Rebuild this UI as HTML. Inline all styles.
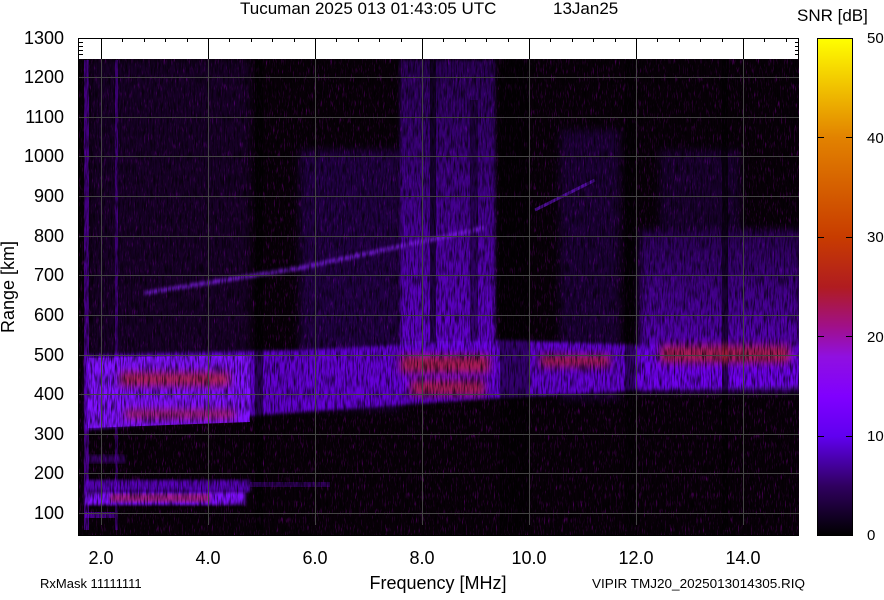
<!DOCTYPE html>
<html><head><meta charset="utf-8"><style>
body{margin:0;background:#fff;width:884px;height:595px;overflow:hidden;font-family:"Liberation Sans",sans-serif}
</style></head><body>
<svg width="884" height="595" viewBox="0 0 884 595" xmlns="http://www.w3.org/2000/svg" font-family="Liberation Sans, sans-serif">
<defs>
<filter id="b4" x="-20%" y="-20%" width="140%" height="140%"><feGaussianBlur stdDeviation="4"/></filter>
<filter id="b2"><feGaussianBlur stdDeviation="1.5"/></filter>
<filter id="noise" x="0" y="0" width="100%" height="100%">
<feTurbulence type="fractalNoise" baseFrequency="0.9 0.12" numOctaves="2" seed="3"/>
<feColorMatrix values="0 0 0 0 0.3  0 0 0 0 0.0  0 0 0 0 0.45  0 0 0 2.2 -1.3"/>
</filter>
<filter id="dark" x="0" y="0" width="100%" height="100%">
<feTurbulence type="fractalNoise" baseFrequency="0.7 0.08" numOctaves="2" seed="7"/>
<feColorMatrix values="0 0 0 0 0  0 0 0 0 0  0 0 0 0 0  0 0 0 2.5 -1.0"/>
</filter>
<clipPath id="pc"><rect x="79" y="59" width="720" height="476"/></clipPath>
<linearGradient id="cb" x1="0" y1="1" x2="0" y2="0">
<stop offset="0" stop-color="#000"/>
<stop offset="0.1" stop-color="#300060"/>
<stop offset="0.2" stop-color="#6000f0"/>
<stop offset="0.28" stop-color="#8000ff"/>
<stop offset="0.36" stop-color="#9010e0"/>
<stop offset="0.42" stop-color="#a0108a"/>
<stop offset="0.5" stop-color="#b01c20"/>
<stop offset="0.6" stop-color="#c83c00"/>
<stop offset="0.8" stop-color="#e28200"/>
<stop offset="1" stop-color="#ffff00"/>
</linearGradient>
<linearGradient id="fv" x1="0" y1="0" x2="0" y2="1">
<stop offset="0" stop-color="#5000b0" stop-opacity="0.45"/>
<stop offset="0.7" stop-color="#7000f0" stop-opacity="0.75"/>
<stop offset="1" stop-color="#7a10ff" stop-opacity="0.9"/>
</linearGradient>
</defs>
<text x="240" y="14" font-size="17">Tucuman 2025 013 01:43:05 UTC</text>
<text x="553" y="14" font-size="17">13Jan25</text>
<text x="797" y="21" font-size="17">SNR [dB]</text>
<rect x="78.5" y="38.5" width="720" height="497" fill="#fff" stroke="#000"/>
<rect x="79" y="59" width="720" height="476" fill="#080008"/>
<rect x="79" y="59" width="720" height="476" filter="url(#noise)"/>
<g clip-path="url(#pc)">
<rect x="84" y="60" width="5" height="470" fill="#6a00d0" opacity="0.6"/>
<rect x="90" y="60" width="160" height="300" fill="#3a0070" opacity="0.3" filter="url(#b4)"/>
<rect x="115" y="60" width="3" height="470" fill="#7000e0" opacity="0.4"/>
<rect x="400" y="60" width="95" height="330" fill="url(#fv)" filter="url(#b2)"/>
<rect x="430" y="60" width="6" height="330" fill="#000" opacity="0.6"/>
<rect x="470" y="100" width="8" height="290" fill="#000" opacity="0.4"/>
<rect x="300" y="150" width="100" height="260" fill="#5000b0" opacity="0.35" filter="url(#b4)"/>
<rect x="560" y="130" width="60" height="270" fill="#4a00a0" opacity="0.3" filter="url(#b4)"/>
<rect x="640" y="230" width="160" height="160" fill="url(#fv)" filter="url(#b4)"/>
<rect x="660" y="150" width="80" height="80" fill="#40008a" opacity="0.3" filter="url(#b4)"/>
<path d="M85 355 L300 350 L400 345 L500 340 L640 345 L799 345 L799 385 L640 390 L500 398 L400 405 L300 412 L200 420 L85 430 Z" fill="#7000f0" opacity="0.85" filter="url(#b2)"/>
<path d="M88 358 L250 355 L250 422 L88 428 Z" fill="#8010ff"/>
<rect x="255" y="60" width="8" height="470" fill="#000" opacity="0.55"/>
<rect x="500" y="60" width="30" height="470" fill="#000" opacity="0.45"/>
<rect x="625" y="60" width="10" height="470" fill="#000" opacity="0.5"/>
<rect x="722" y="60" width="6" height="470" fill="#000" opacity="0.6"/>
<g fill="#b82030" filter="url(#b4)" opacity="0.8">
<rect x="120" y="372" width="110" height="14"/>
<rect x="125" y="410" width="110" height="8"/>
<rect x="400" y="355" width="90" height="18"/>
<rect x="410" y="380" width="75" height="15"/>
<rect x="540" y="355" width="70" height="12"/>
<rect x="660" y="345" width="130" height="18"/>
</g>
<rect x="85" y="480" width="165" height="12" fill="#7000f0" opacity="0.75" filter="url(#b2)"/>
<rect x="85" y="492" width="160" height="13" fill="#8010ff" filter="url(#b2)"/>
<rect x="110" y="494" width="100" height="8" fill="#b02060" opacity="0.7" filter="url(#b2)"/>
<rect x="85" y="512" width="30" height="6" fill="#7000e0" opacity="0.6"/>
<rect x="85" y="455" width="40" height="8" fill="#6000c0" opacity="0.5" filter="url(#b2)"/>
<rect x="250" y="482" width="80" height="5" fill="#6000c0" opacity="0.4"/>
<path d="M145 293 L300 268 L485 228" stroke="#8a20ff" stroke-width="4" fill="none" opacity="0.75" filter="url(#b2)"/>
<path d="M535 210 L595 180" stroke="#7a18f0" stroke-width="3" fill="none" opacity="0.6"/>
<rect x="79" y="59" width="720" height="476" filter="url(#dark)" opacity="0.7"/>
</g>
<g stroke="#444" stroke-width="1">
<path d="M79 77.5H799M79 117.5H799M79 156.5H799M79 196.5H799M79 236.5H799M79 275.5H799M79 315.5H799M79 355.5H799M79 394.5H799M79 434.5H799M79 473.5H799M79 513.5H799"/>
<path d="M101.5 38V525M208.5 38V525M315.5 38V525M422.5 38V525M529.5 38V525M636.5 38V525M743.5 38V525"/>
</g>
<g stroke="#000">
<path d="M101.5 38V59M208.5 38V59M315.5 38V59M422.5 38V59M529.5 38V59M636.5 38V59M743.5 38V59"/>
<path d="M122.5 38v4M144.5 38v4M165.5 38v4M187.5 38v4M229.5 38v4M251.5 38v4M272.5 38v4M294.5 38v4M336.5 38v4M358.5 38v4M379.5 38v4M401.5 38v4M443.5 38v4M465.5 38v4M486.5 38v4M508.5 38v4M550.5 38v4M572.5 38v4M593.5 38v4M615.5 38v4M657.5 38v4M679.5 38v4M700.5 38v4M722.5 38v4M764.5 38v4M786.5 38v4"/>
<path d="M79 42.5h4M79 46.5h4M79 50.5h4M79 54.5h4M795 42.5h4M795 46.5h4M795 50.5h4M795 54.5h4"/>
</g>
<g font-size="18" text-anchor="end">
<text x="64" y="44">1300</text><text x="64" y="83">1200</text><text x="64" y="123">1100</text><text x="64" y="162">1000</text>
<text x="64" y="202">900</text><text x="64" y="242">800</text><text x="64" y="281">700</text><text x="64" y="321">600</text>
<text x="64" y="361">500</text><text x="64" y="400">400</text><text x="64" y="440">300</text><text x="64" y="479">200</text><text x="64" y="519">100</text>
</g>
<g font-size="18" text-anchor="middle">
<text x="101" y="564">2.0</text><text x="208" y="564">4.0</text><text x="315" y="564">6.0</text><text x="422" y="564">8.0</text>
<text x="529" y="564">10.0</text><text x="636" y="564">12.0</text><text x="743" y="564">14.0</text>
<text x="438" y="589">Frequency [MHz]</text>
</g>
<text x="14" y="287" font-size="18" text-anchor="middle" transform="rotate(-90 14 287)">Range [km]</text>
<text x="40" y="588" font-size="13">RxMask 11111111</text>
<text x="592" y="588" font-size="13" textLength="213" lengthAdjust="spacingAndGlyphs">VIPIR  TMJ20_2025013014305.RIQ</text>
<rect x="817.5" y="38.5" width="35" height="497" fill="url(#cb)" stroke="#000"/>
<g stroke="#000"><path d="M817 137.5h7M846 137.5h7M817 237.5h7M846 237.5h7M817 336.5h7M846 336.5h7M817 436.5h7M846 436.5h7"/></g>
<g font-size="15"><text x="867" y="43">50</text><text x="867" y="143">40</text><text x="867" y="242">30</text><text x="867" y="342">20</text><text x="867" y="441">10</text><text x="867" y="540">0</text></g>
</svg>
</body></html>
